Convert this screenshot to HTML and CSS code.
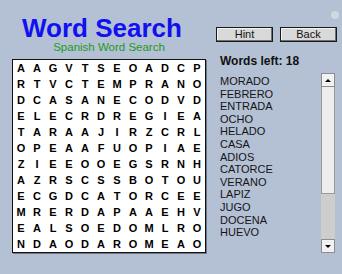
FILE: index.html
```html
<!DOCTYPE html>
<html>
<head>
<meta charset="utf-8">
<link rel="stylesheet" href="styles.css">
</head>
<body>
<div class="app">
  <div class="left">
    <h1 class="title">Word Search</h1>
    <div class="subtitle">Spanish Word Search</div>
    <div class="grid">
      <span>A</span><span>A</span><span>G</span><span>V</span><span>T</span><span>S</span><span>E</span><span>O</span><span>A</span><span>D</span><span>C</span><span>P</span>
      <span>R</span><span>T</span><span>V</span><span>C</span><span>T</span><span>E</span><span>M</span><span>P</span><span>R</span><span>A</span><span>N</span><span>O</span>
      <span>D</span><span>C</span><span>A</span><span>S</span><span>A</span><span>N</span><span>E</span><span>C</span><span>O</span><span>D</span><span>V</span><span>D</span>
      <span>E</span><span>L</span><span>E</span><span>C</span><span>R</span><span>D</span><span>R</span><span>E</span><span>G</span><span>I</span><span>E</span><span>A</span>
      <span>T</span><span>A</span><span>R</span><span>A</span><span>A</span><span>J</span><span>I</span><span>R</span><span>Z</span><span>C</span><span>R</span><span>L</span>
      <span>O</span><span>P</span><span>E</span><span>A</span><span>A</span><span>F</span><span>U</span><span>O</span><span>P</span><span>I</span><span>A</span><span>E</span>
      <span>Z</span><span>I</span><span>E</span><span>E</span><span>O</span><span>O</span><span>E</span><span>G</span><span>S</span><span>R</span><span>N</span><span>H</span>
      <span>A</span><span>Z</span><span>R</span><span>S</span><span>C</span><span>S</span><span>S</span><span>B</span><span>O</span><span>T</span><span>O</span><span>U</span>
      <span>E</span><span>C</span><span>G</span><span>D</span><span>C</span><span>A</span><span>T</span><span>O</span><span>R</span><span>C</span><span>E</span><span>E</span>
      <span>M</span><span>R</span><span>E</span><span>R</span><span>D</span><span>A</span><span>P</span><span>A</span><span>A</span><span>E</span><span>H</span><span>V</span>
      <span>E</span><span>A</span><span>L</span><span>S</span><span>O</span><span>E</span><span>D</span><span>O</span><span>M</span><span>L</span><span>R</span><span>O</span>
      <span>N</span><span>D</span><span>A</span><span>O</span><span>D</span><span>A</span><span>R</span><span>O</span><span>M</span><span>E</span><span>A</span><span>O</span>
    </div>
  </div>
  <div class="right">
    <div class="buttons">
      <button class="btn">Hint</button>
      <button class="btn">Back</button>
    </div>
    <div class="left-count">Words left: 18</div>
    <div class="listbox">
      <ul class="words">
        <li>MORADO</li>
        <li>FEBRERO</li>
        <li>ENTRADA</li>
        <li>OCHO</li>
        <li>HELADO</li>
        <li>CASA</li>
        <li>ADIOS</li>
        <li>CATORCE</li>
        <li>VERANO</li>
        <li>LAPIZ</li>
        <li>JUGO</li>
        <li>DOCENA</li>
        <li>HUEVO</li>
      </ul>
      <div class="scrollbar">
        <div class="sb-btn"><span class="arrow-up"></span></div>
        <div class="sb-thumb"></div>
        <div class="sb-track"></div>
        <div class="sb-btn"><span class="arrow-down"></span></div>
      </div>
    </div>
  </div>
  <div class="dot"></div>
</div>
</body>
</html>
```

FILE: styles.css
```css
html, body {
  margin: 0;
  padding: 0;
  background: #b4c0d4;
}
body {
  width: 342px;
  height: 274px;
  overflow: hidden;
  font-family: "Liberation Sans", Arial, sans-serif;
}
.app {
  position: relative;
  display: flex;
  width: 342px;
  height: 274px;
}
.left {
  padding-left: 12px;
  padding-top: 15px;
  width: 194px;
}
.title {
  margin: 0;
  padding-right: 14px;
  font-size: 26px;
  line-height: 26px;
  font-weight: bold;
  color: #1010f0;
  text-align: center;
}
.subtitle {
  font-size: 11.5px;
  line-height: 13px;
  color: #1f9a25;
  text-align: center;
}
.grid {
  margin-top: 5px;
  width: 192px;
  height: 192px;
  border: 1px solid #111;
  background: #fff;
  box-shadow: 1px 1px 0 #6f7888;
  display: grid;
  grid-template-columns: repeat(12, 16px);
  grid-template-rows: repeat(12, 16px);
}
.grid span {
  display: flex;
  align-items: center;
  justify-content: center;
  font-size: 11px;
  font-weight: bold;
  color: #000;
}
.right {
  margin-left: 10px;
  padding-top: 27px;
  width: 121px;
}
.buttons {
  display: flex;
  gap: 7px;
}
.btn {
  width: 57px;
  height: 15px;
  margin: 0;
  padding: 0;
  border: 1px solid #1a1a1a;
  box-shadow: inset -1px -1px 0 #707070, inset 1px 1px 0 #f4f4f4;
  background: #d9d9d9;
  font-family: "Liberation Sans", Arial, sans-serif;
  font-size: 11px;
  line-height: 13px;
  color: #111;
}
.left-count {
  margin-top: 12px;
  padding-left: 4px;
  font-size: 12px;
  line-height: 14px;
  font-weight: bold;
  color: #111;
}
.listbox {
  margin-top: 5px;
  display: flex;
  height: 180px;
}
.words {
  list-style: none;
  margin: 0;
  padding: 2px 0 0 4px;
  width: 101px;
  font-size: 11px;
  line-height: 12.6px;
  color: #141414;
}
.scrollbar {
  width: 14px;
  height: 180px;
  display: flex;
  flex-direction: column;
  background: #cdcdcd;
}
.sb-btn {
  box-sizing: border-box;
  height: 14px;
  border: 1px solid #8c8c8c;
  background: #f2f2f2;
  display: flex;
  align-items: center;
  justify-content: center;
}
.arrow-up {
  width: 0;
  height: 0;
  border-left: 3px solid transparent;
  border-right: 3px solid transparent;
  border-bottom: 3px solid #000;
}
.arrow-down {
  width: 0;
  height: 0;
  border-left: 3px solid transparent;
  border-right: 3px solid transparent;
  border-top: 3px solid #000;
}
.sb-thumb {
  box-sizing: border-box;
  height: 107px;
  border: 1px solid #9a9a9a;
  border-top: none;
  background: #ededed;
}
.sb-track {
  flex: 1;
  background: #cdcdcd;
}
.dot {
  position: absolute;
  left: 331px;
  top: 11px;
  width: 8px;
  height: 8px;
  border-radius: 50%;
  background: #d2d6de;
}
```
